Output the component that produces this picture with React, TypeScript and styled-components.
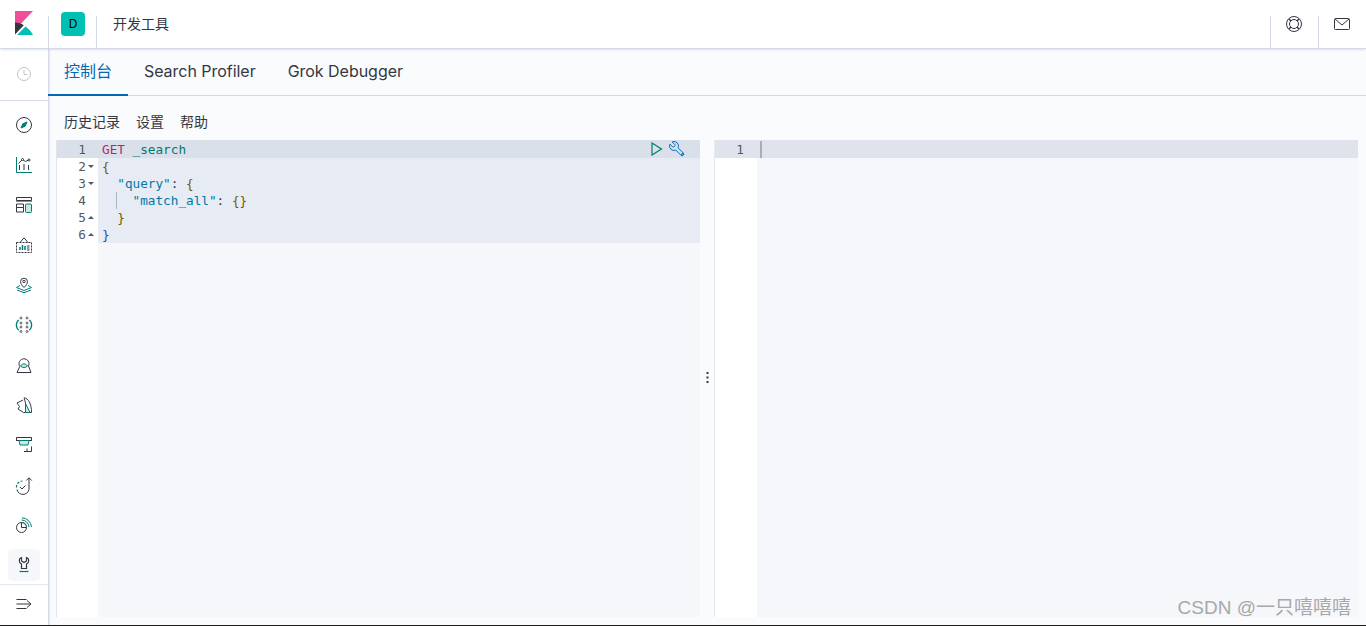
import React from 'react';
import styled, { createGlobalStyle } from 'styled-components';

const GlobalStyle = createGlobalStyle`
  html, body {
    margin: 0;
    padding: 0;
    height: 100%;
    overflow: hidden;
    background: #fff;
    font-family: Inter, "Noto Sans CJK SC", sans-serif;
  }
  #root { height: 100%; }
  * { box-sizing: border-box; }
`;

const DARK = '#343741';
const TEAL = '#017d73';

type IconProps = { children: React.ReactNode };

const Icon: React.FC<IconProps> = ({ children }) => (
  <svg width="16" height="16" viewBox="0 0 16 16" fill="none" stroke={DARK} strokeWidth="1" overflow="visible">
    {children}
  </svg>
);

const navIcons: React.ReactNode[] = [
  <Icon key="discover">
    <circle cx="8" cy="8" r="7.5" />
    <path d="M11 5L9.2 9.2 5 11l1.8-4.2z" fill={TEAL} stroke={TEAL} />
  </Icon>,
  <Icon key="visualize">
    <path d="M.5 0v15.5H16" stroke={TEAL} />
    <path d="M3.500 13V8M8 13V7M12.500 13V8" />
    <path d="M2.500 6.500L6.500 2.500l3 2 3-1.500" />
    <circle cx="6.500" cy="2.500" r="1" fill="#fff" />
    <circle cx="13" cy="3" r="1" fill="#fff" />
  </Icon>,
  <Icon key="dashboard">
    <path d="M.5.5h15v3H.5z" />
    <path d="M0 4.500h16" stroke="#8a8d96" />
    <path d="M.5 7h7v3.500h-7zM.5 10.500h7v4.500h-7z" />
    <rect x="9.500" y="7" width="6" height="8.500" rx="1" stroke={TEAL} fill="#cfe7e4" />
  </Icon>,
  <Icon key="canvas">
    <path d="M.5 5.500h15v10H.5z" strokeDasharray="2 1" />
    <path d="M4 5.500L8 .8l4 4.700" />
    <path d="M4 13V10M6.500 13V8M9 13V9" stroke={TEAL} strokeWidth="1.500" />
    <path d="M11 9h2.500M11 11h2.500M11 13h2.500" />
  </Icon>,
  <Icon key="maps">
    <path d="M8 10.500C6 8.500 4.600 7 4.600 4.600a3.400 3.400 0 016.800 0C11.400 7 10 8.500 8 10.500z" />
    <circle cx="8" cy="4.500" r="1.200" />
    <path d="M4 8.500L.5 10.500 8 13.500l7.500-3L12 8.500" stroke={TEAL} />
    <path d="M1 13l7 2.700L15 13" stroke={TEAL} />
  </Icon>,
  <Icon key="ml">
    {[5, 11].map((x) =>
      [1, 6, 10, 14.500].map((y) => <circle key={`${x}-${y}`} cx={x} cy={y} r="1" strokeWidth=".8" />),
    )}
    <path d="M2.800 3C-.4 5 -.4 11 2.800 13M13.200 3c3.200 2 3.200 8 0 10" stroke={TEAL} strokeWidth="1.300" />
  </Icon>,
  <Icon key="infra">
    <path d="M1 15.500L3.800 9.500A5 5 0 1112.500 9" />
    <path d="M1 15.500h14L12.500 9" />
    <path d="M4.500 9c2-2.800 5-2.800 7 0-2 2-5 2-7 0z" stroke={TEAL} fill="#cfe7e4" />
  </Icon>,
  <Icon key="logs">
    <path d="M8 .8c4.500.5 7.500 6 7.500 14.700H14" />
    <path d="M9.500 15.500H14L9.500 6.500z" stroke={TEAL} fill="#cfe7e4" />
    <path d="M8 .8C8.500 2 9 3.500 9.500 6.500M7 3L1 6l2.500 3.500L2 12l5.500 3.500h2" />
  </Icon>,
  <Icon key="apm">
    <path d="M.5 3.500V.5h15v3M0 3.500h16" />
    <path d="M3 3.500h10L12 8H4z" stroke={TEAL} fill="#cfe7e4" />
    <path d="M8 14.500h7.500V9.500M11 11.500v3" />
  </Icon>,
  <Icon key="uptime">
    <path d="M.9 12.500A6 6 0 0013 10V1" />
    <path d="M10.300 3.500L13 .8l2.700 2.700" />
    <path d="M.5 10.500A6 6 0 016.500 4" stroke={TEAL} strokeDasharray="2.500 1.500" strokeWidth="1.200" />
    <path d="M4 10l2 2 3.500-3.500" />
  </Icon>,
  <Icon key="siem">
    <circle cx="5.500" cy="10.500" r="5" />
    <path d="M5.500 5.500v5h5" />
    <path d="M5.500 3A7.500 7.500 0 0113 10M6 .8A10 10 0 0115.500 10M7 5.500A5 5 0 0110.500 8.500" stroke={TEAL} />
  </Icon>,
  <Icon key="devtools">
    <path d="M5.500 .5C2.500 1.500 2.500 5.500 5.500 7v4.500h5V7c3-1.500 3-5.500 0-6.500v3.500L8 5.500 5.500 4z" strokeWidth="1.200" />
    <path d="M3.500 14.500h9" stroke={TEAL} strokeWidth="1.200" />
  </Icon>,
];

const App: React.FC = () => (
  <Page>
    <GlobalStyle />
    <Header>
      <LogoCell>
        <svg width="18" height="24" viewBox="0 0 18 24">
          <path d="M0 0h18L0 19z" fill="#f04e98" />
          <path d="M0 11.500c3.200 0 6.200 1 8.800 2.700L0 23.500z" fill={DARK} />
          <path d="M2 24L10.500 15.400C14 18 16.500 20.500 18 24z" fill="#00bfb3" />
        </svg>
      </LogoCell>
      <AvatarCell>
        <Avatar>D</Avatar>
      </AvatarCell>
      <Breadcrumb>开发工具</Breadcrumb>
      <HeaderAction>
        <svg width="16" height="16" viewBox="0 0 16 16" fill="none" stroke={DARK}>
          <circle cx="8" cy="8" r="7.500" />
          <circle cx="8" cy="8" r="4.500" />
          <path d="M3 3l2 2M13 3l-2 2M3 13l2-2M13 13l-2-2" strokeWidth="1.500" />
        </svg>
      </HeaderAction>
      <HeaderAction>
        <svg width="16" height="12" viewBox="0 0 16 12" fill="none" stroke={DARK}>
          <rect x=".5" y=".5" width="15" height="11" rx="1" />
          <path d="M1 1l7 6 7-6" />
        </svg>
      </HeaderAction>
    </Header>
    <Body>
      <SideNav>
        <RecentSection>
          <svg width="16" height="16" viewBox="0 0 16 16" fill="none" stroke="#c2c3c6">
            <circle cx="8" cy="8" r="6.500" />
            <path d="M8 4v4.500h3.500" />
          </svg>
        </RecentSection>
        <NavList>
          {navIcons.map((icon, index) => (
            <NavItem key={index} $active={index === navIcons.length - 1}>
              {icon}
            </NavItem>
          ))}
        </NavList>
        <CollapseSection>
          <svg width="16" height="12" viewBox="0 0 16 12" fill="none" stroke={DARK}>
            <path d="M.5 1.500h10M.5 6h14M.5 10.500h10M11 2.500L15 6l-4 3.500" />
          </svg>
        </CollapseSection>
      </SideNav>
      <Main>
        <Tabs>
          <Tab $active>控制台</Tab>
          <Tab>Search Profiler</Tab>
          <Tab>Grok Debugger</Tab>
        </Tabs>
        <Menu>
          <MenuItem>历史记录</MenuItem>
          <MenuItem>设置</MenuItem>
          <MenuItem>帮助</MenuItem>
        </Menu>
        <Editors>
          <RequestPane>
            <Gutter>
              <GutterRow $current>1</GutterRow>
              <GutterRow $fold="open">2</GutterRow>
              <GutterRow $fold="open">3</GutterRow>
              <GutterRow>4</GutterRow>
              <GutterRow $fold="close">5</GutterRow>
              <GutterRow $fold="close">6</GutterRow>
            </Gutter>
            <Code>
              <CodeRow $current>
                <Verb>GET</Verb> <Url>_search</Url>
                <RowActions>
                  <svg width="14" height="14" viewBox="0 0 14 14" fill="none" stroke={TEAL} strokeWidth="1.200">
                    <path d="M1 1v12l9.500-6z" />
                  </svg>
                  <svg width="18" height="18" viewBox="0 0 24 24" fill="none" stroke="#006bb4" strokeWidth="1.300">
                    <g transform="matrix(-1 0 0 1 24 0)">
                      <path d="M14.700 6.300a1 1 0 0 0 0 1.400l1.600 1.600a1 1 0 0 0 1.400 0l3.770-3.770a6 6 0 0 1-7.940 7.940l-6.910 6.910a2.120 2.120 0 0 1-3-3l6.910-6.910a6 6 0 0 1 7.940-7.940l-3.760 3.760z" />
                    </g>
                    <circle cx="19" cy="19" r="1" />
                  </svg>
                </RowActions>
              </CodeRow>
              <CodeRow $marked>
                <Paren>{'{'}</Paren>
              </CodeRow>
              <CodeRow $marked>
                {'  '}
                <Key>"query"</Key>: <Paren>{'{'}</Paren>
              </CodeRow>
              <CodeRow $marked>
                <IndentGuide />
                {'    '}
                <Key>"match_all"</Key>: <Paren>{'{}'}</Paren>
              </CodeRow>
              <CodeRow $marked>
                {'  '}
                <Paren>{'}'}</Paren>
              </CodeRow>
              <CodeRow $marked>
                <ClosingParen>{'}'}</ClosingParen>
              </CodeRow>
            </Code>
          </RequestPane>
          <Splitter>
            <svg width="3" height="11" viewBox="0 0 3 11" fill="#343741">
              <rect x=".5" y="0" width="2" height="2" />
              <rect x=".5" y="4.500" width="2" height="2" />
              <rect x=".5" y="9" width="2" height="2" />
            </svg>
          </Splitter>
          <ResponsePane>
            <Gutter $narrow>
              <GutterRow $current $light>1</GutterRow>
            </Gutter>
            <Code>
              <OutputRow />
            </Code>
          </ResponsePane>
        </Editors>
      </Main>
    </Body>
    <Watermark>CSDN @一只嘻嘻嘻</Watermark>
  </Page>
);

const Page = styled.div`
  position: relative;
  display: flex;
  flex-direction: column;
  height: 626px;
  border-bottom: 1px solid #1a1a1a;
  overflow: hidden;
`;

const Header = styled.header`
  display: flex;
  height: 49px;
  flex: none;
  background: #fff;
  border-bottom: 1px solid #d3dae6;
  box-shadow: 0 2px 2px -1px rgba(152, 162, 179, 0.3);
  position: relative;
  z-index: 1;
`;

const LogoCell = styled.div`
  width: 48px;
  padding: 11px 0 0 15px;
  position: relative;

  &::after {
    content: '';
    position: absolute;
    right: -1px;
    top: 16px;
    bottom: 0;
    width: 1px;
    background: #d3dae6;
  }
`;

const AvatarCell = styled.div`
  width: 49px;
  padding: 12px 0 0 13px;
  position: relative;

  &::after {
    content: '';
    position: absolute;
    right: 0;
    top: 16px;
    bottom: 0;
    width: 1px;
    background: #d3dae6;
  }
`;

const Avatar = styled.div`
  width: 24px;
  height: 24px;
  border-radius: 4px;
  background: #00bfb3;
  color: #000;
  font-size: 12px;
  line-height: 24px;
  text-align: center;
`;

const Breadcrumb = styled.div`
  flex: 1;
  padding: 15px 0 0 16px;
  font-size: 14px;
  line-height: 18px;
  color: #343741;
`;

const HeaderAction = styled.div`
  width: 48px;
  display: flex;
  justify-content: center;
  align-items: center;
  position: relative;

  &::before {
    content: '';
    position: absolute;
    left: 0;
    top: 16px;
    bottom: 0;
    width: 1px;
    background: #d3dae6;
  }
`;

const Body = styled.div`
  flex: 1;
  min-height: 0;
  display: flex;
`;

const SideNav = styled.nav`
  width: 49px;
  flex: none;
  display: flex;
  flex-direction: column;
  background: #fff;
  border-right: 1px solid #d3dae6;
  box-shadow: 1px 0 2px rgba(152, 162, 179, 0.2);
  position: relative;
`;

const RecentSection = styled.div`
  height: 52px;
  flex: none;
  display: flex;
  align-items: center;
  justify-content: center;
  padding-bottom: 1px;
  border-bottom: 1px solid #d3dae6;
`;

const NavList = styled.div`
  flex: 1;
  padding-top: 4px;
  display: flex;
  flex-direction: column;
  align-items: center;
`;

const NavItem = styled.div<{ $active?: boolean }>`
  width: 32px;
  height: 40px;
  flex: none;
  display: flex;
  align-items: center;
  justify-content: center;
  border-radius: 4px;
  background: ${({ $active }) => ($active ? '#f5f7fa' : 'transparent')};
  ${({ $active }) => $active && 'height: 32px; margin-top: 4px;'}
`;

const CollapseSection = styled.div`
  height: 41px;
  flex: none;
  display: flex;
  align-items: center;
  justify-content: center;
  padding-bottom: 2px;
  border-top: 1px solid #e4e8ef;
`;

const Main = styled.main`
  flex: 1;
  min-width: 0;
  display: flex;
  flex-direction: column;
  background: #fafbfd;
`;

const Tabs = styled.div`
  height: 47px;
  flex: none;
  display: flex;
  border-bottom: 1px solid #d3dae6;
`;

const Tab = styled.div<{ $active?: boolean }>`
  position: relative;
  z-index: 1;
  height: 47px;
  padding: 0 16px;
  margin-left: ${({ $active }) => ($active ? '-1px' : '0')};
  font-size: 16px;
  letter-spacing: -0.03px;
  line-height: 44px;
  color: ${({ $active }) => ($active ? '#006bb4' : '#343741')};
  border-bottom: 2px solid ${({ $active }) => ($active ? '#006bb4' : 'transparent')};
`;

const Menu = styled.div`
  height: 44px;
  flex: none;
  display: flex;
  gap: 16px;
  padding: 17px 0 0 15px;
`;

const MenuItem = styled.div`
  font-size: 14px;
  line-height: 18px;
  color: #343741;
`;

const Editors = styled.div`
  flex: 1;
  min-height: 0;
  display: flex;
  padding: 0 0 8px 7px;
  font-family: "DejaVu Sans Mono", monospace;
  font-size: 12.7px;
  line-height: 17px;
`;

const RequestPane = styled.section`
  width: 644px;
  flex: none;
  display: flex;
  background: #f5f7fa;
  border-left: 1px solid #dfe5ef;
`;

const ResponsePane = styled.section`
  flex: 1;
  display: flex;
  margin-right: 8px;
  background: #f5f7fa;
`;

const Gutter = styled.div<{ $narrow?: boolean }>`
  width: ${({ $narrow }) => ($narrow ? 42 : 41)}px;
  flex: none;
  background: #fff;
  color: #535966;
`;

const GutterRow = styled.div<{ $current?: boolean; $light?: boolean; $fold?: 'open' | 'close' }>`
  position: relative;
  height: ${({ $current }) => ($current ? 18 : 17)}px;
  padding-top: ${({ $current }) => ($current ? 1 : 0)}px;
  padding-right: ${({ $light }) => ($light ? 13 : 12)}px;
  text-align: right;
  background: ${({ $current, $light }) => ($current ? ($light ? '#dfe3ec' : '#d9e0ea') : 'transparent')};

  &::after {
    content: '';
    display: ${({ $fold }) => ($fold ? 'block' : 'none')};
    position: absolute;
    right: 4px;
    top: 7px;
    border-left: 3px solid transparent;
    border-right: 3px solid transparent;
    ${({ $fold }) => ($fold === 'close' ? 'border-bottom: 3px solid #535966;' : 'border-top: 3px solid #535966;')}
  }
`;

const Code = styled.div`
  flex: 1;
  min-width: 0;
`;

const CodeRow = styled.div<{ $current?: boolean; $marked?: boolean }>`
  position: relative;
  height: ${({ $current }) => ($current ? 18 : 17)}px;
  padding-top: ${({ $current }) => ($current ? 1 : 0)}px;
  padding-left: 4px;
  white-space: pre;
  color: #343741;
  background: ${({ $current, $marked }) => ($current ? '#d9e0ea' : $marked ? '#e7ebf3' : 'transparent')};
`;

const OutputRow = styled.div`
  position: relative;
  height: 18px;
  background: #dfe3ec;

  &::before {
    content: '';
    position: absolute;
    left: 3px;
    top: 1px;
    width: 2px;
    height: 17px;
    background: #a9adb5;
  }
`;

const Verb = styled.span`
  color: #bc1e70;
`;

const Url = styled.span`
  color: #00786f;
`;

const Key = styled.span`
  color: #0079a5;
`;

const Paren = styled.span`
  color: #6e5a00;
`;

const ClosingParen = styled.span`
  color: #2a4aa8;
`;

const IndentGuide = styled.span`
  position: absolute;
  left: 18px;
  top: 0;
  width: 1px;
  height: 17px;
  background: #a9b3c4;
`;

const RowActions = styled.span`
  position: absolute;
  right: 14px;
  top: 0;
  display: flex;
  align-items: center;
  gap: 3px;
`;

const Splitter = styled.div`
  width: 15px;
  flex: none;
  display: flex;
  align-items: center;
  justify-content: center;
  padding-bottom: 2px;
  background: #fafbfd;
  border-right: 1px solid #e6ebf2;
`;

const Watermark = styled.div`
  position: absolute;
  right: 15px;
  bottom: 5px;
  font-family: "Liberation Sans", "Noto Sans CJK SC", sans-serif;
  font-size: 19px;
  line-height: 24px;
  color: #a8a8a8;
`;

export default App;
